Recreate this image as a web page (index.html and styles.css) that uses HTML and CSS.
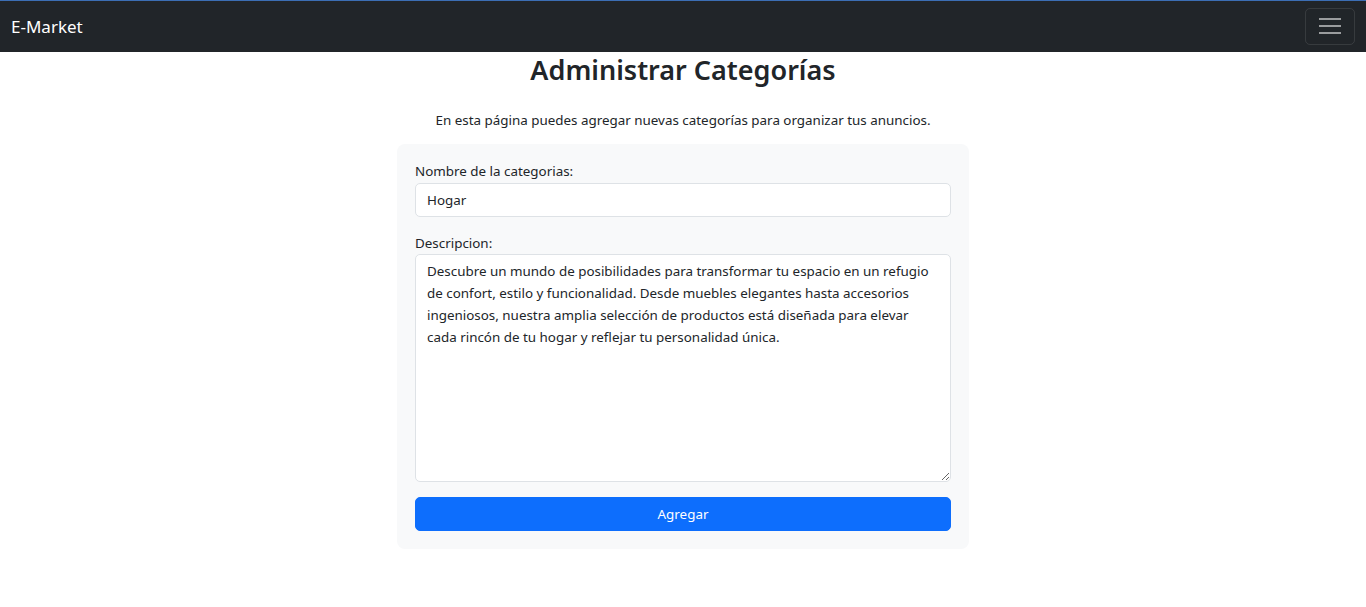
FILE: index.html
```html
<!DOCTYPE html>
<html lang="es">
<head>
<meta charset="utf-8">
<title>E-Market</title>
<link rel="stylesheet" href="styles.css">
</head>
<body>
<nav class="navbar">
  <a class="brand" href="#">E-Market</a>
  <button class="toggler" type="button" aria-label="Menu">
    <svg width="24" height="20" viewBox="0 0 24 20"><path d="M1 3h22M1 10h22M1 17h22" stroke="rgba(255,255,255,0.55)" stroke-width="2" stroke-linecap="butt"/></svg>
  </button>
</nav>
<main class="page">
  <h1 class="title">Administrar Categorías</h1>
  <p class="lead">En esta página puedes agregar nuevas categorías para organizar tus anuncios.</p>
  <form class="card">
    <label class="label" for="nombre">Nombre de la categorias:</label>
    <input class="control" id="nombre" type="text" value="Hogar">
    <label class="label label-gap" for="desc">Descripcion:</label>
    <textarea class="control area" id="desc">Descubre un mundo de posibilidades para transformar tu espacio en un refugio de confort, estilo y funcionalidad. Desde muebles elegantes hasta accesorios ingeniosos, nuestra amplia selección de productos está diseñada para elevar cada rincón de tu hogar y reflejar tu personalidad única.</textarea>
    <button class="btn" type="button">Agregar</button>
  </form>
</main>
</body>
</html>
```
FILE: styles.css
```css
* { box-sizing: border-box; }
html, body { margin: 0; padding: 0; }
body {
  font-family: "Noto Sans", "Open Sans", sans-serif;
  font-size: 13.4px;
  line-height: 1.5;
  color: #212529;
  background: #fff;
  border-top: 1px solid #3c6eb4;
}
.navbar {
  height: 51px;
  background: #212529;
  display: flex;
  align-items: center;
  justify-content: space-between;
  padding: 0 11px 0 11px;
}
.brand {
  color: #fff;
  text-decoration: none;
  font-size: 17px;
}
.toggler {
  width: 50px;
  height: 37px;
  margin-top: -1px;
  background: transparent;
  border: 1px solid rgba(255,255,255,0.1);
  border-radius: 5px;
  display: flex;
  align-items: center;
  justify-content: center;
  padding: 0;
}
.page {
  display: flex;
  flex-direction: column;
  align-items: center;
}
.title {
  margin: 2px 0 0;
  font-size: 27px;
  font-weight: 600;
  line-height: 1.2;
}
.lead {
  margin: 24px 0 0;
  font-size: 13.4px;
  line-height: 20px;
}
.card {
  margin-top: 14px;
  width: 572px;
  background: #f8f9fa;
  border-radius: 8px;
  padding: 17px 18px 18px;
  display: flex;
  flex-direction: column;
}
.label { margin-bottom: 1px; }
.label-gap { margin-top: 16px; }
.control {
  font-family: inherit;
  font-size: 13.4px;
  line-height: 22px;
  color: #212529;
  background: #fff;
  border: 1px solid #dee2e6;
  border-radius: 5px;
  padding: 5px 11px;
  height: 34px;
  width: 100%;
}
.area {
  height: 228px;
  padding: 5px 11px;
  resize: vertical;
}
.btn {
  margin-top: 15px;
  height: 34px;
  background: #0d6efd;
  color: #fff;
  border: 1px solid #0d6efd;
  border-radius: 5px;
  font-family: inherit;
  font-size: 13.4px;
}
```
